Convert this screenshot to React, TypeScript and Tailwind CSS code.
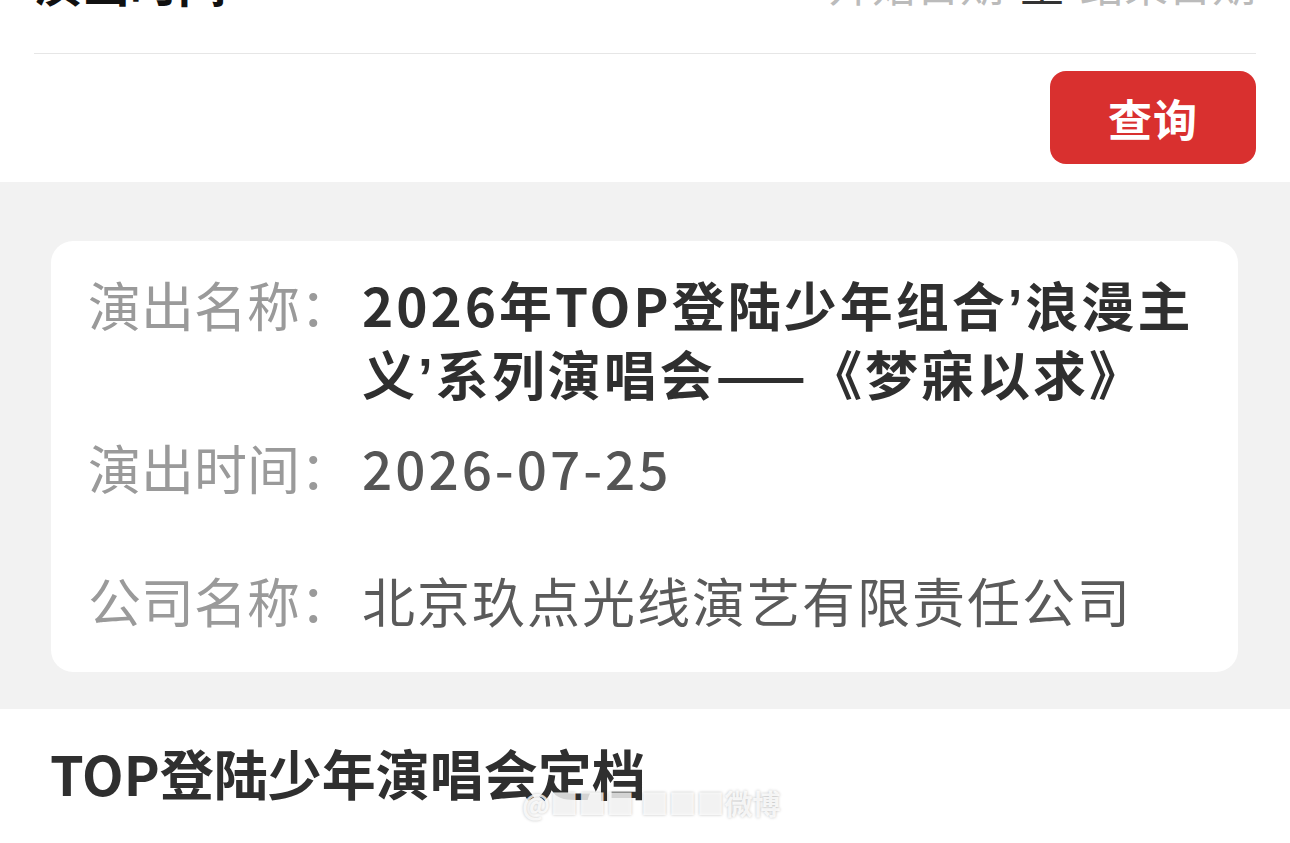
import { memo } from 'react';

const FONT = "font-['Noto_Sans_CJK_SC','Noto_Sans',sans-serif]";

const Quote = () => <span className="font-['Liberation_Sans',sans-serif]">’</span>;

const InfoRow = memo(function InfoRow({
  label,
  children,
  valueClass,
  className,
}: {
  label: string;
  children: React.ReactNode;
  valueClass: string;
  className?: string;
}) {
  return (
    <div className={`flex ${className ?? ''}`}>
      <dt className="w-[274px] shrink-0 text-[53px] leading-[64px] text-[#9a9a9a]">{label}</dt>
      <dd className={`flex-1 text-[53px] leading-[64px] ${valueClass}`}>{children}</dd>
    </div>
  );
});

export default function App() {
  return (
    <div className={`min-h-screen overflow-hidden bg-white ${FONT}`}>
      {/* query panel, scrolled so only the tail of its first row shows */}
      <section className="px-[34px]">
        <div className="-mt-[41px] flex h-[46px] items-end justify-between">
          <h2 className="text-[48px] font-bold leading-none text-[#111]">演出时间</h2>
          <div className="flex items-center gap-[16px] text-[44px] leading-none text-[#bbbbbb]">
            <span>开始日期</span>
            <span className="text-[#333]">至</span>
            <span>结束日期</span>
          </div>
        </div>
        <div className="mt-[48px] h-px bg-[#e6e6e6]" />
        <div className="flex justify-end pt-[17px] pb-[18px]">
          <button
            type="button"
            className="flex h-[93px] w-[206px] items-center justify-center rounded-[16px] bg-[#d9302f] text-[44px] font-bold tracking-[1px] text-white"
          >
            查询
          </button>
        </div>
      </section>

      {/* result */}
      <section className="bg-[#f2f2f2] pt-[59px] pb-[37px] pl-[51px] pr-[52px]">
        <dl className="rounded-[22px] bg-white pt-[31px] pb-[40px] pl-[37px] pr-[37px]">
          <InfoRow label="演出名称：" valueClass="font-bold tracking-[3px] text-[#2f2f2f]">
            2026年TOP登陆少年组合<Quote />浪漫主义<Quote />系列演唱会——《梦寐以求》
          </InfoRow>
          <InfoRow label="演出时间：" valueClass="font-medium tracking-[3px] text-[#555]" className="mt-[25px]">
            2026-07-25
          </InfoRow>
          <InfoRow label="公司名称：" valueClass="tracking-[2px] text-[#5a5a5a]" className="mt-[69px]">
            北京玖点光线演艺有限责任公司
          </InfoRow>
        </dl>
      </section>

      {/* news */}
      <section className="relative px-[50px] pt-[32px]">
        <h1 className="text-[54px] font-bold leading-[64px] text-[#2f2f2f]">TOP登陆少年演唱会定档</h1>
        <span className="pointer-events-none absolute left-[522px] top-[80px] text-[28px] font-bold leading-none text-white/80 [text-shadow:0_0_3px_rgba(0,0,0,0.25)]">
          @■■■ ■■■微博
        </span>
      </section>
    </div>
  );
}
